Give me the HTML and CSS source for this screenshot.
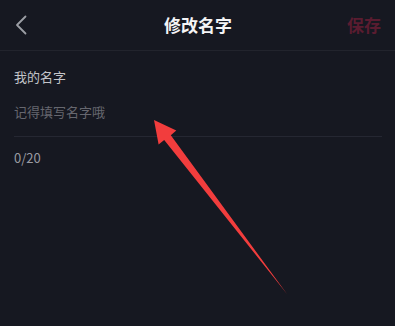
FILE: index.html
```html
<!DOCTYPE html>
<html lang="zh">
<head>
<meta charset="utf-8">
<link rel="stylesheet" href="styles.css">
</head>
<body>
<div class="page">
  <header class="nav">
    <span class="back">
      <svg width="12" height="20" viewBox="0 0 12 20"><path d="M10.5 1.5 L2 10 L10.5 18.5" fill="none" stroke="#9c9ea5" stroke-width="1.8" stroke-linecap="round" stroke-linejoin="round"/></svg>
    </span>
    <h1 class="title">修改名字</h1>
    <span class="save">保存</span>
  </header>
  <section class="form">
    <div class="label">我的名字</div>
    <div class="field"><span class="placeholder">记得填写名字哦</span></div>
    <div class="count">0/20</div>
  </section>
  <svg class="arrow" width="395" height="326" viewBox="0 0 395 326">
    <polygon points="154,120 176.3,130.5 170.8,135.2 287,294 164.2,140 158.6,144.6" fill="#f23d3d"/>
  </svg>
</div>
</body>
</html>
```
FILE: styles.css
```css
html, body {
  margin: 0;
  padding: 0;
  background: #161821;
}
body {
  font-family: "Noto Sans CJK SC", "Noto Sans", sans-serif;
  width: 395px;
  height: 326px;
  overflow: hidden;
}
.page {
  position: relative;
  width: 395px;
  height: 326px;
}
.nav {
  height: 50px;
  display: flex;
  align-items: center;
  justify-content: space-between;
  padding: 0 14px 0 15px;
  border-bottom: 1px solid #22242d;
}
.back {
  width: 40px;
  display: flex;
  align-items: center;
}
.back svg { display: block; }
.title {
  margin: 0;
  font-size: 17px;
  font-weight: 700;
  color: #f4f4f6;
  line-height: 20px;
}
.save {
  width: 40px;
  text-align: right;
  font-size: 17px;
  font-weight: 700;
  color: #5a1c30;
  line-height: 20px;
}
.form {
  padding: 16px 14px 0;
}
.label {
  font-size: 13px;
  line-height: 20px;
  color: #c3c4c9;
}
.field {
  margin-top: 14px;
  padding-bottom: 14px;
  border-bottom: 1px solid #252732;
  margin-right: 0;
  width: 368px;
}
.placeholder {
  font-size: 13px;
  line-height: 21px;
  color: #66676f;
  display: block;
}
.count {
  margin-top: 11px;
  font-size: 13px;
  line-height: 20px;
  color: #9a9ba2;
}
.arrow {
  position: absolute;
  left: 0;
  top: 0;
  pointer-events: none;
}
```
